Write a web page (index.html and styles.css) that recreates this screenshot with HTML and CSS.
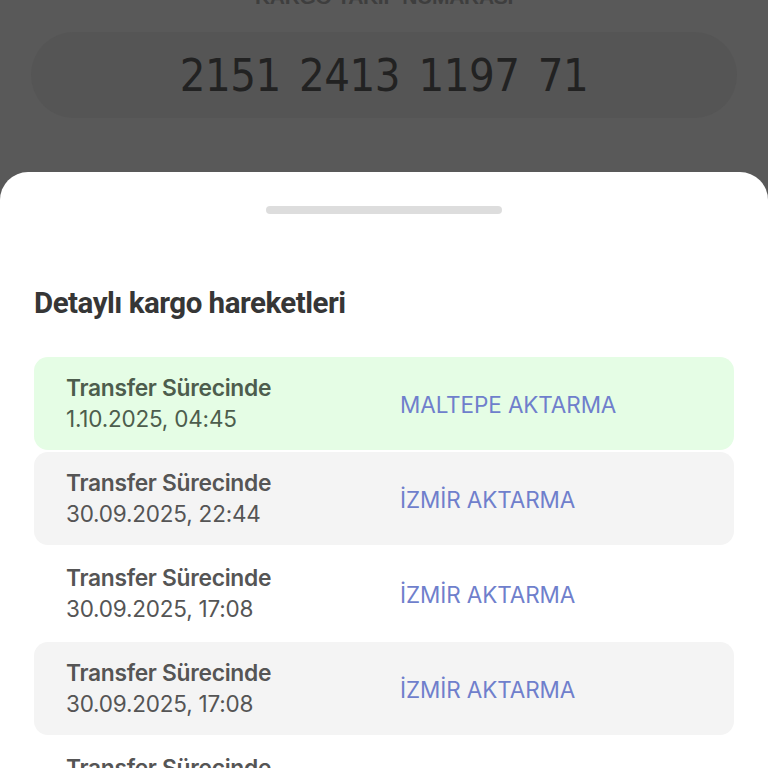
FILE: index.html
```html
<!DOCTYPE html>
<html lang="tr">
<head>
<meta charset="utf-8">
<link rel="stylesheet" href="styles.css">
</head>
<body>
<div class="screen">
  <div class="top">
    <div class="label">KARGO TAKIP NUMARASI</div>
    <div class="pill"><span class="num">2151 2413 1197 71</span></div>
  </div>
  <div class="sheet">
    <div class="handle"></div>
    <h1 class="title">Detaylı kargo hareketleri</h1>
    <div class="list">
      <div class="row green">
        <div class="left"><div class="status">Transfer Sürecinde</div><div class="date">1.10.2025, 04:45</div></div>
        <div class="loc">MALTEPE AKTARMA</div>
      </div>
      <div class="row gray">
        <div class="left"><div class="status">Transfer Sürecinde</div><div class="date">30.09.2025, 22:44</div></div>
        <div class="loc">İZMİR AKTARMA</div>
      </div>
      <div class="row">
        <div class="left"><div class="status">Transfer Sürecinde</div><div class="date">30.09.2025, 17:08</div></div>
        <div class="loc">İZMİR AKTARMA</div>
      </div>
      <div class="row gray">
        <div class="left"><div class="status">Transfer Sürecinde</div><div class="date">30.09.2025, 17:08</div></div>
        <div class="loc">İZMİR AKTARMA</div>
      </div>
      <div class="row">
        <div class="left"><div class="status">Transfer Sürecinde</div><div class="date">30.09.2025, 16:12</div></div>
        <div class="loc">İZMİR AKTARMA</div>
      </div>
    </div>
  </div>
</div>
</body>
</html>
```

FILE: styles.css
```css
html, body {
  margin: 0;
  padding: 0;
  width: 768px;
  height: 768px;
  overflow: hidden;
  background: #595959;
}
.screen {
  width: 768px;
  height: 768px;
  overflow: hidden;
  font-family: Inter, "Liberation Sans", sans-serif;
}
.top {
  height: 172px;
  display: flex;
  flex-direction: column;
  align-items: center;
}
.label {
  margin-top: -13px;
  height: 20px;
  font-family: "Liberation Sans", sans-serif;
  font-weight: bold;
  font-size: 21px;
  color: #3e3e3e;
  letter-spacing: -0.3px;
  line-height: 20px;
}
.pill {
  margin-top: 25px;
  width: 706px;
  height: 86px;
  border-radius: 43px;
  background: #555555;
  display: flex;
  align-items: center;
  justify-content: center;
}
.num {
  font-family: "DejaVu Sans Condensed", "DejaVu Sans", sans-serif;
  font-stretch: condensed;
  font-size: 45px;
  color: #222222;
  word-spacing: 6px;
  letter-spacing: -0.5px;
  white-space: pre;
}
.sheet {
  background: #ffffff;
  border-radius: 28px 28px 0 0;
  height: 600px;
  padding: 0 34px;
  display: flex;
  flex-direction: column;
}
.sheet > * { flex-shrink: 0; }
.handle {
  align-self: center;
  width: 236px;
  height: 8px;
  border-radius: 4px;
  background: #dddddd;
  margin-top: 34px;
}
.title {
  margin: 73px 0 0 0;
  font-family: Roboto, "Liberation Sans", sans-serif;
  font-weight: 700;
  font-size: 29.5px;
  line-height: 32px;
  color: #363636;
  letter-spacing: -0.5px;
}
.list {
  margin-top: 38px;
  display: flex;
  flex-direction: column;
  gap: 2px;
}
.row {
  height: 93px;
  flex-shrink: 0;
  border-radius: 14px;
  display: flex;
  align-items: center;
  padding-left: 32px;
  box-sizing: border-box;
}
.row.green { background: #e5fde5; }
.row.gray { background: #f4f4f4; }
.left {
  width: 334px;
  display: flex;
  flex-direction: column;
}
.status {
  font-weight: 600;
  font-size: 22.8px;
  line-height: 30px;
  color: #555555;
  letter-spacing: -0.3px;
}
.date {
  font-size: 22.5px;
  line-height: 32px;
  color: #555555;
  letter-spacing: -0.2px;
}
.green .status, .green .date { color: #4d5d4d; }
.loc {
  font-size: 22.5px;
  color: #6f7fcc;
  letter-spacing: -0.1px;
  margin-top: 2px;
}
```
